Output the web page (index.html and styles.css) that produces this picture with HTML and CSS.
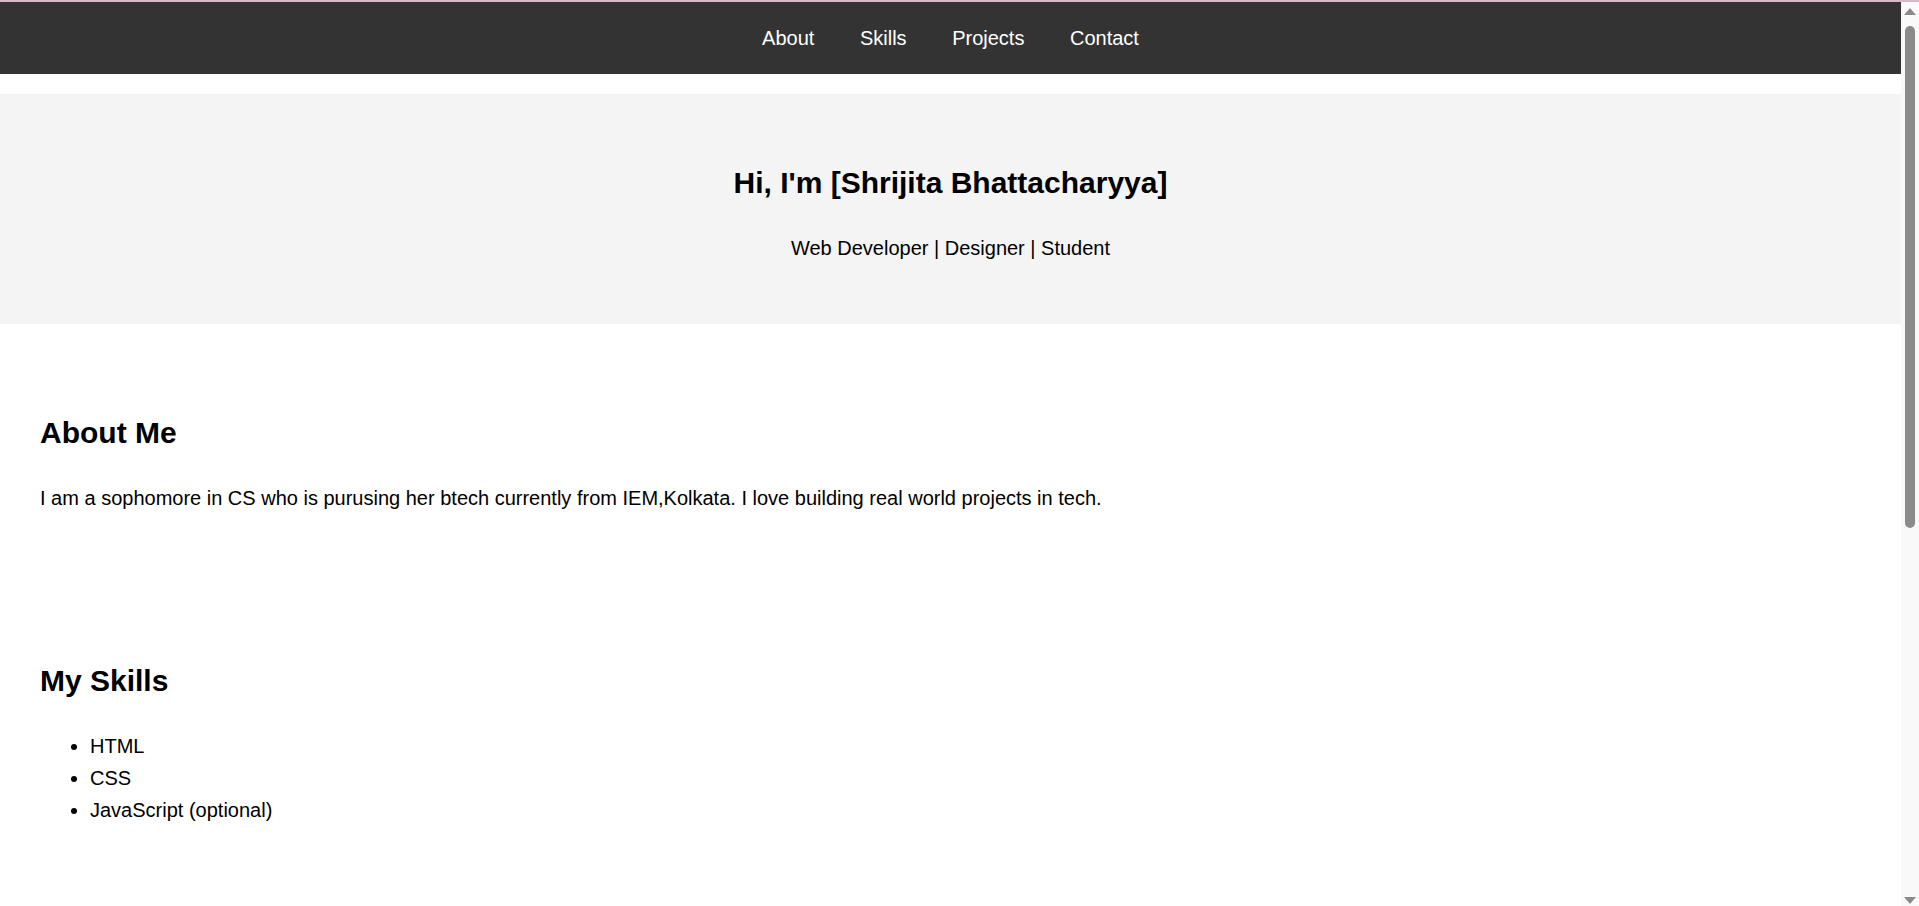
FILE: index.html
```html
<!DOCTYPE html>
<html lang="en">
<head>
<meta charset="utf-8">
<title>Shrijita Bhattacharyya - Portfolio</title>
<link rel="stylesheet" href="styles.css">
</head>
<body>
<div class="page">
  <header class="site-header">
    <nav class="nav">
      <ul class="nav-list">
        <li class="nav-item"><a class="nav-link" href="#about">About</a></li>
        <li class="nav-item"><a class="nav-link" href="#skills">Skills</a></li>
        <li class="nav-item"><a class="nav-link" href="#projects">Projects</a></li>
        <li class="nav-item"><a class="nav-link" href="#contact">Contact</a></li>
      </ul>
    </nav>
  </header>

  <section class="hero">
    <h2 class="hero-title">Hi, I'm [Shrijita Bhattacharyya]</h2>
    <p class="hero-sub">Web Developer | Designer | Student</p>
  </section>

  <section class="section" id="about">
    <h2 class="section-title">About Me</h2>
    <p class="text">I am a sophomore in CS who is purusing her btech currently from IEM,Kolkata. I love building real world projects in tech.</p>
  </section>

  <section class="section" id="skills">
    <h2 class="section-title">My Skills</h2>
    <ul class="skill-list">
      <li>HTML</li>
      <li>CSS</li>
      <li>JavaScript (optional)</li>
    </ul>
  </section>
</div>

<div class="scrollbar" aria-hidden="true">
  <span class="scroll-arrow scroll-up"></span>
  <span class="scroll-thumb"></span>
  <span class="scroll-arrow scroll-down"></span>
</div>
</body>
</html>
```
FILE: styles.css
```css
html, body {
  margin: 0;
  padding: 0;
}

body {
  font-family: "Liberation Sans", Arial, sans-serif;
  font-size: 20px;
  line-height: 1.6;
  color: #000;
  background: #fff;
  border-top: 2px solid #d6bac7;
  height: 904px;
  overflow: hidden;
}

.page {
  margin-right: 18px;
}

.site-header {
  background: #333;
}

.nav {
  padding: 20px 0;
  text-align: center;
}

.nav-list {
  list-style: none;
  margin: 0;
  padding: 0;
}

.nav-item {
  display: inline;
  margin: 0 20px;
}

.nav-link {
  color: #fff;
  text-decoration: none;
}

.hero {
  margin: 20px 0;
  padding: 40px;
  background: #f4f4f4;
  text-align: center;
}

.hero-title,
.section-title {
  font-size: 30px;
  font-weight: bold;
  margin: 25px 0;
}

.hero-sub {
  margin: 20px 0;
}

.section {
  margin: 18px 0;
  padding: 40px;
}

.text {
  margin: 20px 0;
}

.skill-list {
  margin: 20px 0;
  padding-left: 50px;
}

/* fake browser scrollbar drawn over the right edge */
.scrollbar {
  position: fixed;
  top: 2px;
  right: 0;
  bottom: 0;
  width: 18px;
  background: #f9f9f9;
}

.scroll-thumb {
  position: absolute;
  top: 24px;
  left: 4px;
  width: 10px;
  height: 502px;
  border-radius: 5px;
  background: #8a8a8a;
}

.scroll-arrow {
  position: absolute;
  left: 3px;
  width: 0;
  height: 0;
  border-left: 6px solid transparent;
  border-right: 6px solid transparent;
}

.scroll-up {
  top: 6px;
  border-bottom: 7px solid #8a8a8a;
}

.scroll-down {
  bottom: 2px;
  border-top: 7px solid #8a8a8a;
}
```
